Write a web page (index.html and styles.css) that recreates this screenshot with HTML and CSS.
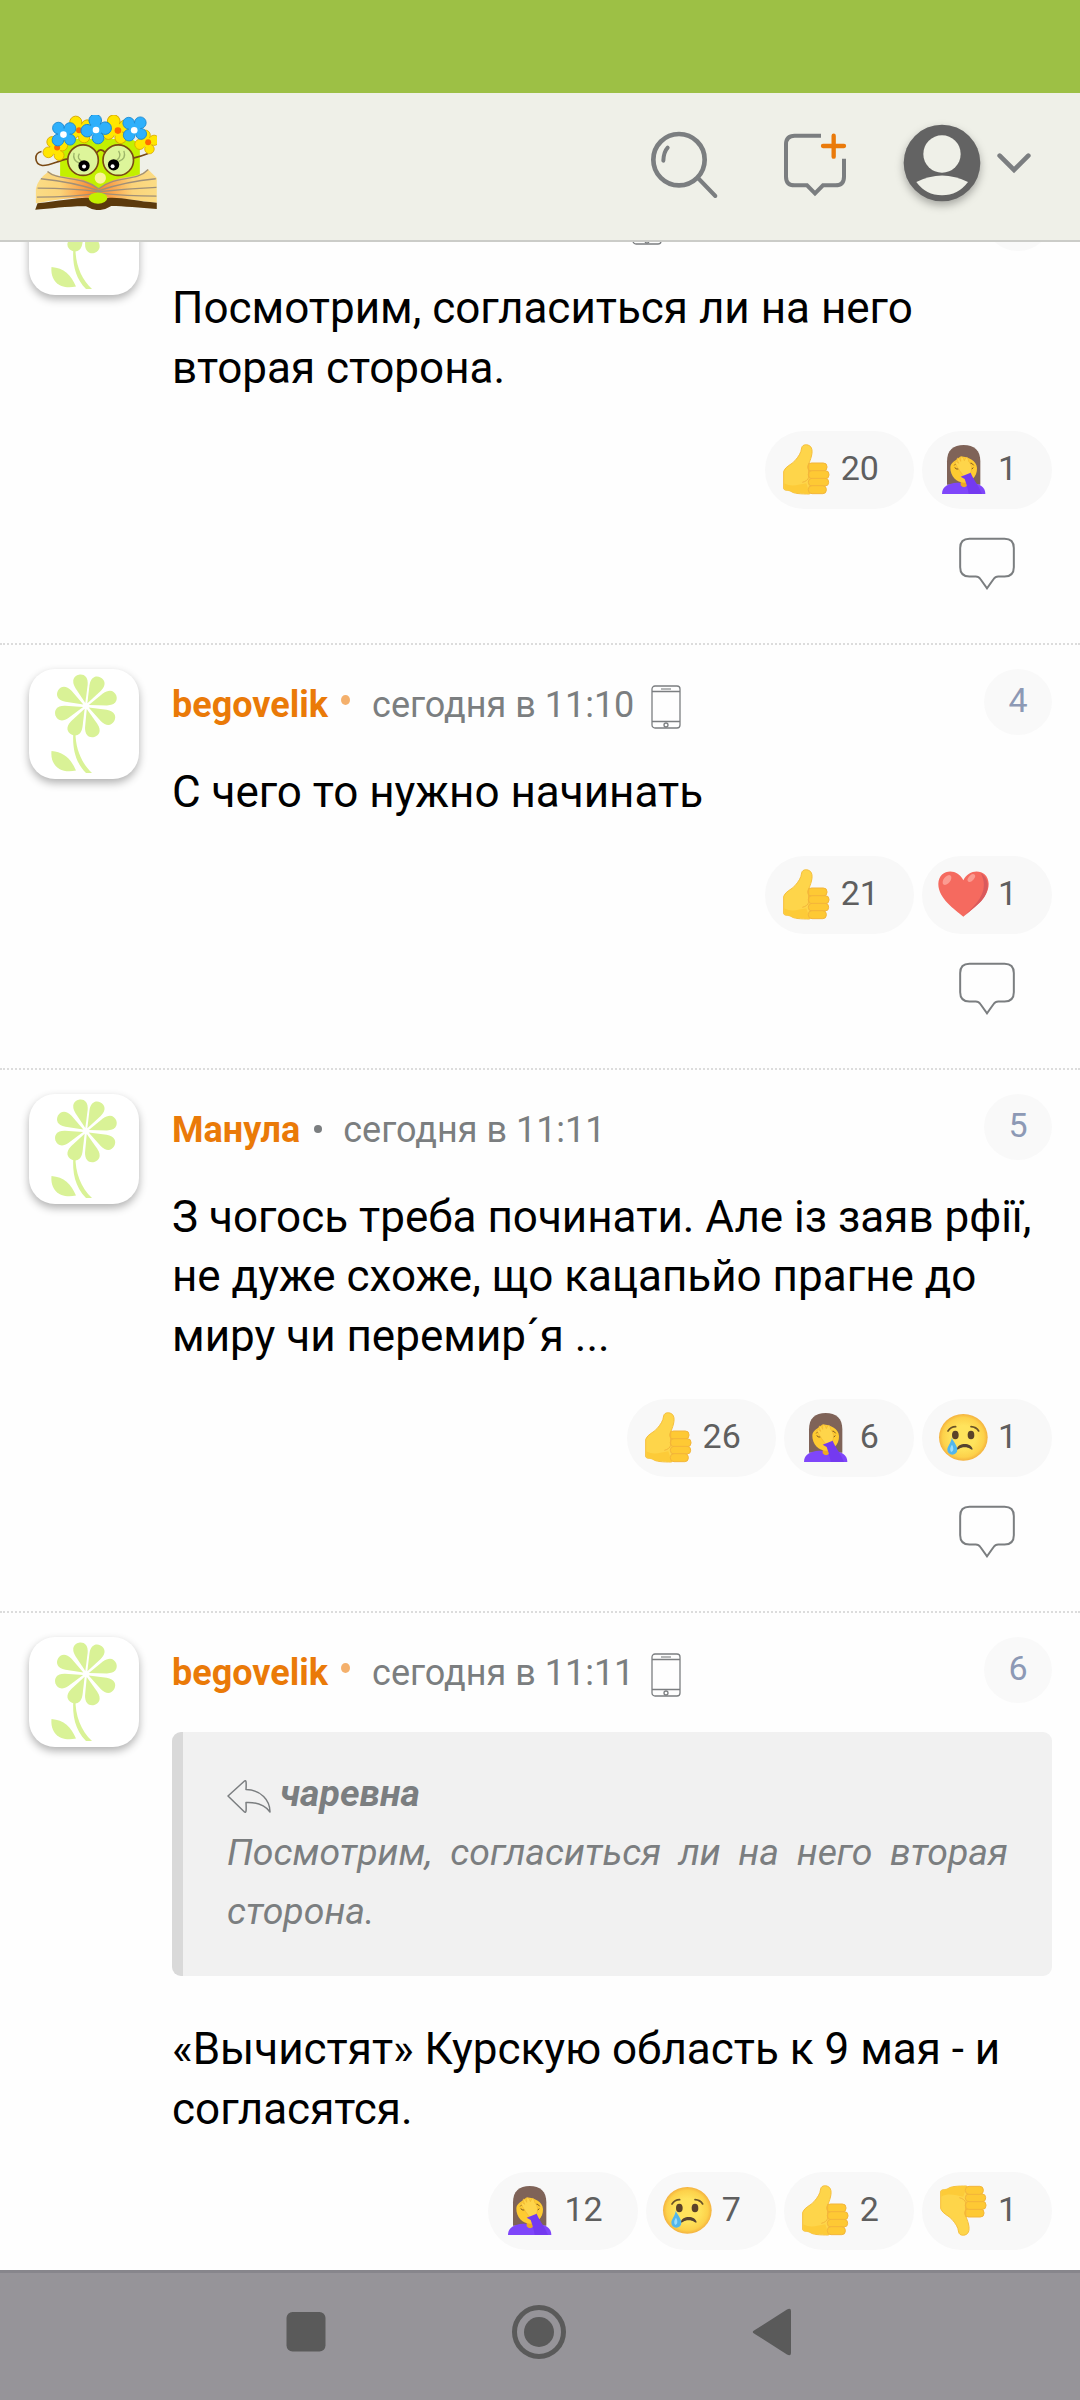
FILE: index.html
```html
<!DOCTYPE html>
<html lang="ru">
<head>
  <meta charset="utf-8">
  <title>Комментарии</title>
  <link rel="stylesheet" href="styles.css">
</head>
<body>
  <svg class="sprite">
    <defs>
      <linearGradient id="page" x1="0" x2="1">
        <stop offset="0" stop-color="#fbdc85"/>
        <stop offset=".2" stop-color="#fbd47a"/>
        <stop offset=".5" stop-color="#f9802a"/>
        <stop offset=".8" stop-color="#fbd47a"/>
        <stop offset="1" stop-color="#fbdc85"/>
      </linearGradient>
      <radialGradient id="face">
        <stop offset=".5" stop-color="#ffe35c"/>
        <stop offset=".85" stop-color="#fdd14a"/>
        <stop offset="1" stop-color="#f4b23f"/>
      </radialGradient>
      <path id="petal" d="M0 -3L-6.300 -20C-9 -28 -5 -32 0 -32S9 -28 6.300 -20Z"/>
      <g id="blossom">
        <circle cx="-14" cy="-14" r="14"/><circle cx="14" cy="-15" r="14"/>
        <circle cx="16" cy="12" r="13"/><circle cx="-13" cy="15" r="14"/>
        <circle r="14" stroke="none"/>
      </g>
    </defs>
    <symbol id="flower" viewBox="0 0 110 110">
      <g fill="#d9f296">
        <use href="#petal" transform="translate(57 37) rotate(-13)"/>
        <use href="#petal" transform="translate(57 37) rotate(27)"/>
        <use href="#petal" transform="translate(57 37) rotate(71)"/>
        <use href="#petal" transform="translate(57 37) rotate(118)"/>
        <use href="#petal" transform="translate(57 37) rotate(165)"/>
        <use href="#petal" transform="translate(57 37) rotate(207)"/>
        <use href="#petal" transform="translate(57 37) rotate(253)"/>
        <use href="#petal" transform="translate(57 37) rotate(299)"/>
        <path d="M44.500 62H46.500C46 78 52 94 63 104H57C46 93 43 78 44.500 62Z"/>
        <path d="M22.500 82C21 97 32 105 47 101.500C42 90 35 83 22.500 82Z"/>
      </g>
    </symbol>
    <symbol id="phone" viewBox="0 0 30 44">
      <g fill="none" stroke="#7b7e80" stroke-width="1.300">
        <rect x="1" y="1" width="28" height="42" rx="3"/>
        <path d="M1 6.500H29M1 36.500H29"/>
        <circle cx="15" cy="40" r="2"/>
        <path d="M10 4H20" stroke="#b5b7b8" stroke-width="2"/>
      </g>
    </symbol>
    <symbol id="reply" viewBox="654 381 174 160">
      <path d="M688 386H794Q822 386 822 414V472Q822 500 794 500H775Q766 500 761 508L741 536L721 508Q716 500 707 500H688Q660 500 660 472V414Q660 386 688 386Z" fill="none" stroke="#7b7e80" stroke-width="6"/>
    </symbol>
    <symbol id="arrow" viewBox="0 0 44 33">
      <path d="M1 16L17.500 1C19 0 19.500 1 19 9.500C34 10 43 20 43 32C37 24 29 22 19 22.500C19.500 32 19 33 17.500 32Z" fill="none" stroke="#7b7e80" stroke-width="1.500" stroke-linejoin="round"/>
    </symbol>
    <symbol id="thumb" viewBox="0 0 153 153">
      <path d="M8 82C14 66 32 62 42 50C52 38 60 28 62 12C64 0 80 0 88 7C98 18 92 38 84 58C98 90 98 120 86 150C60 150 38 149 30 142C22 137 8 142 8 132Z" fill="#fed54a" stroke="#f6bf3c" stroke-width="3"/>
      <path d="M10 118C30 130 54 122 76 118L86 149C60 149 38 148 30 142C22 137 9 140 10 130Z" fill="#fdcb38"/>
      <g fill="#fec934" stroke="#f3b53a" stroke-width="3">
        <rect x="80" y="57" width="58" height="24" rx="11"/>
        <rect x="82" y="80" width="62" height="24" rx="11"/>
        <rect x="82" y="103" width="61" height="23" rx="11"/>
        <rect x="82" y="125" width="54" height="24" rx="11"/>
      </g>
      <path d="M83 58V100Q80 111 64 115" fill="none" stroke="#f3b53a" stroke-width="3"/>
    </symbol>
    <symbol id="facepalm" viewBox="0 0 153 153">
      <path d="M27 122V52C27 18 46 3 77 3S127 18 127 52V122Z" fill="#7f6358"/>
      <path d="M12 150C12 126 32 118 56 116H98C122 118 142 126 142 150Z" fill="#7f46fa"/>
      <path d="M68 104H88V124Q78 136 68 124Z" fill="#eeaa22"/>
      <path d="M37 70C38 54 54 50 66 38C84 36 116 48 117 72C118 100 96 116 77 116S36 98 37 70Z" fill="#fecb31"/>
      <path d="M49 64Q54 55 63 58M50 71Q56 78 64 74M93 58Q103 55 107 64M95 75Q102 77 106 71" fill="none" stroke="#7b5420" stroke-width="3"/>
      <path d="M50 54Q56 50 62 58L57 44Q62 38 68 52L68 40Q74 34 79 50L83 42Q90 36 92 52C102 62 104 80 94 92L80 102C72 88 60 76 50 54Z" fill="#fed54a" stroke="#f2b634" stroke-width="2"/>
      <path d="M68 98L98 86C106 106 122 124 132 150H92C90 132 84 118 80 105Z" fill="#743af0"/>
    </symbol>
    <symbol id="cry" viewBox="0 0 153 153">
      <ellipse cx="76" cy="76" rx="73" ry="70" fill="url(#face)"/>
      <path d="M30 57Q38 44 53 44M99 44Q115 45 122 57" fill="none" stroke="#6a5227" stroke-width="5" stroke-linecap="round"/>
      <ellipse cx="52" cy="69" rx="10" ry="13" fill="#5b4329"/>
      <ellipse cx="99" cy="69" rx="10" ry="13" fill="#5b4329"/>
      <path d="M56 112C60 91 100 90 104 112C100 117 98 106 80 106S60 117 56 112Z" fill="#574330"/>
      <path d="M41 78C49 92 58 103 58 113A15 15 0 0 1 28 113C28 103 39 94 41 78Z" fill="#52b6ec"/>
      <path d="M42 98C37 104 34 114 40 120C48 116 47 106 42 98Z" fill="#9bdcfb"/>
    </symbol>
    <symbol id="heart" viewBox="0 0 153 153">
      <path d="M76 143C50 122 0 88 1 44C2 0 58 -6 76 34C94 -6 151 0 152 44C153 88 102 122 76 143Z" fill="#f56a5f"/>
      <path d="M128 12C162 34 151 78 124 102L76 143C112 108 158 68 128 12Z" fill="#d95a5d"/>
      <ellipse cx="27" cy="33" rx="10" ry="17" transform="rotate(38 27 33)" fill="#fb9c92"/>
      <ellipse cx="100" cy="27" rx="8" ry="14" transform="rotate(42 100 27)" fill="#fb9c92"/>
    </symbol>
  </svg>

  <div class="statusbar"></div>
  <header class="header">
    <svg class="logo" viewBox="105 100 366 286">
      <path d="M180 200Q182 176 220 172H385Q418 176 420 200V300L300 345L180 300Z" fill="#c3f000"/>
      <path d="M145 270C190 300 240 270 296 324C350 272 400 300 445 264L471 290V364C410 358 340 346 296 350C240 346 170 352 107 366V322Q112 294 145 270Z" fill="url(#page)"/>
      <g fill="none" stroke="#a09078" stroke-width="4">
        <path d="M142 270C175 300 240 280 296 322C350 280 410 302 445 264"/>
        <path d="M122 292Q220 302 296 328Q380 300 468 292M112 320Q220 320 296 331Q380 322 470 318M110 347Q220 347 296 335Q380 344 470 344"/>
      </g>
      <path d="M105 385L112 366C180 358 250 346 268 350H322C360 346 410 360 471 364V383C420 380 370 374 334 374Q296 398 258 375C210 374 150 382 105 385Z" fill="#5c3a0c"/>
      <ellipse cx="294" cy="350" rx="28" ry="17" fill="#c3f000"/>
      <circle cx="301" cy="290" r="17" fill="#fbf39a"/>
      <g fill="#ddf59a" stroke="#7a4a14" stroke-width="5">
        <circle cx="249" cy="236" r="46"/>
        <circle cx="355" cy="236" r="46"/>
        <path d="M203 232C170 238 150 254 126 252C102 248 100 214 124 210M290 214Q302 196 316 214M400 230Q425 224 445 216" fill="none"/>
      </g>
      <g fill="none" stroke="#9db56a" stroke-width="4">
        <path d="M222 214Q216 238 240 246M238 216Q228 232 248 240M372 208Q380 232 356 240M356 208Q366 226 350 236"/>
      </g>
      <circle cx="252" cy="253" r="17"/><circle cx="252" cy="255" r="6" fill="#fff"/>
      <circle cx="341" cy="250" r="17"/><circle cx="338" cy="254" r="6" fill="#fff"/>
      <g fill="#ffe600" stroke="#d8a800" stroke-width="2">
        <use href="#blossom" transform="translate(165 202) rotate(22) scale(1.150)"/>
        <use href="#blossom" transform="translate(238 145) rotate(20) scale(1.300)"/>
        <use href="#blossom" transform="translate(441 182) rotate(32) scale(1.100)"/>
        <use href="#blossom" transform="translate(350 144) rotate(26) scale(1.350)"/>
      </g>
      <g fill="#ff6a00">
        <circle cx="171" cy="198" r="9"/><circle cx="237" cy="146" r="9"/>
        <circle cx="354" cy="147" r="10"/><circle cx="445" cy="182" r="9"/>
      </g>
      <g fill="#2eb0fb" stroke="#1685cf" stroke-width="2">
        <use href="#blossom" transform="translate(191 158) rotate(4) scale(1.250)"/>
        <use href="#blossom" transform="translate(288 143) rotate(40) scale(1.350)"/>
        <use href="#blossom" transform="translate(404 142) scale(1.250)"/>
      </g>
      <g fill="#fff">
        <circle cx="190" cy="159" r="10"/><circle cx="288" cy="145" r="10"/><circle cx="403" cy="146" r="10"/>
      </g>
    </svg>
    <div class="header-icons">
      <svg class="icon-search" viewBox="84 97 210 240">
        <g fill="none" stroke="#7b7e80" stroke-linecap="round">
          <circle cx="174" cy="207" r="77" stroke-width="14"/>
          <path d="M231 262L283 316M140 171Q128 184 127 210" stroke-width="12"/>
        </g>
      </svg>
      <svg class="icon-add" viewBox="480 97 204 240">
        <g fill="none" stroke-width="12">
          <path d="M600 135H521Q495 135 495 161V258Q495 284 521 284H558L582 308L606 284H643Q669 284 669 258V204" stroke="#7b7e80"/>
          <path d="M638 135V198M606 166H669" stroke="#ea7a0a" stroke-width="13" stroke-linecap="round"/>
        </g>
      </svg>
      <svg class="icon-user" viewBox="844 97 240 240">
        <circle cx="964" cy="217" r="115" fill="#636363"/>
        <circle cx="964" cy="190" r="56" fill="#eff0e8"/>
        <path d="M887 274Q964 235 1042 274Q1012 314 964 314T887 274Z" fill="#eff0e8"/>
      </svg>
      <svg class="icon-down" viewBox="1120 97 120 240">
        <path d="M1137 195L1180 238L1223 195" fill="none" stroke="#7b7e80" stroke-width="14" stroke-linecap="round"/>
      </svg>
    </div>
  </header>

  <main class="feed">
    <article class="comment">
      <div class="avatar"><svg><use href="#flower"/></svg></div>
      <div class="body">
        <div class="meta scrolled">
          <svg class="phone"><use href="#phone"/></svg>
          <span class="num"></span>
        </div>
        <p class="text">Посмотрим, согласиться ли на него вторая сторона.</p>
        <div class="reactions">
          <span class="pill"><svg><use href="#thumb"/></svg>20</span>
          <span class="pill"><svg><use href="#facepalm"/></svg>1</span>
        </div>
        <svg class="reply"><use href="#reply"/></svg>
      </div>
    </article>

    <article class="comment">
      <div class="avatar"><svg><use href="#flower"/></svg></div>
      <div class="body">
        <div class="meta">
          <span class="name">begovelik</span><span class="dot mobile"></span>
          <span class="date">сегодня в 11:10</span>
          <svg class="phone"><use href="#phone"/></svg>
          <span class="num">4</span>
        </div>
        <p class="text">С чего то нужно начинать</p>
        <div class="reactions">
          <span class="pill"><svg><use href="#thumb"/></svg>21</span>
          <span class="pill"><svg><use href="#heart"/></svg>1</span>
        </div>
        <svg class="reply"><use href="#reply"/></svg>
      </div>
    </article>

    <article class="comment">
      <div class="avatar"><svg><use href="#flower"/></svg></div>
      <div class="body">
        <div class="meta">
          <span class="name">Манула</span><span class="dot"></span>
          <span class="date">сегодня в 11:11</span>
          <span class="num">5</span>
        </div>
        <p class="text">З чогось треба починати. Але із заяв рфії, не дуже схоже, що кацапьйо прагне до миру чи перемир´я ...</p>
        <div class="reactions">
          <span class="pill"><svg><use href="#thumb"/></svg>26</span>
          <span class="pill"><svg><use href="#facepalm"/></svg>6</span>
          <span class="pill"><svg><use href="#cry"/></svg>1</span>
        </div>
        <svg class="reply"><use href="#reply"/></svg>
      </div>
    </article>

    <article class="comment">
      <div class="avatar"><svg><use href="#flower"/></svg></div>
      <div class="body">
        <div class="meta">
          <span class="name">begovelik</span><span class="dot mobile"></span>
          <span class="date">сегодня в 11:11</span>
          <svg class="phone"><use href="#phone"/></svg>
          <span class="num">6</span>
        </div>
        <blockquote class="quote">
          <div class="quote-author"><svg><use href="#arrow"/></svg>чаревна</div>
          <p>Посмотрим, согласиться ли на него вторая сторона.</p>
        </blockquote>
        <p class="text">«Вычистят» Курскую область к 9 мая - и согласятся.</p>
        <div class="reactions">
          <span class="pill"><svg><use href="#facepalm"/></svg>12</span>
          <span class="pill"><svg><use href="#cry"/></svg>7</span>
          <span class="pill"><svg><use href="#thumb"/></svg>2</span>
          <span class="pill"><svg class="flip"><use href="#thumb"/></svg>1</span>
        </div>
      </div>
    </article>
  </main>

  <nav class="navbar">
    <svg viewBox="0 0 60 60"><rect x="10.500" y="10" width="39" height="39.500" rx="6"/></svg>
    <svg viewBox="0 0 60 60"><circle cx="30" cy="30" r="24.500" fill="none" stroke="#5a5a5a" stroke-width="5"/><circle cx="30" cy="30" r="15"/></svg>
    <svg viewBox="0 0 60 60"><path d="M12 28.500L45 7.500Q49 5.500 49 9V51Q49 54.500 45 52.500L12 31.500Q9.500 30 12 28.500Z"/></svg>
  </nav>
</body>
</html>
```
FILE: styles.css
```css
body {
  margin: 0;
  width: 1080px;
  height: 2400px;
  display: flex;
  flex-direction: column;
  overflow: hidden;
  background: #fefefe;
  font-family: Roboto, "Noto Sans", sans-serif;
}
p {
  margin: 0;
}
svg {
  display: block;
  flex: none;
}
.sprite {
  width: 0;
  height: 0;
}
.statusbar {
  flex: none;
  height: 93px;
  background: #9dc045;
}
.header {
  flex: none;
  box-sizing: border-box;
  height: 149px;
  padding: 0 46px 8px 35px;
  display: flex;
  align-items: center;
  justify-content: space-between;
  background: #eff0e8;
  border-bottom: 2px solid #cbccc8;
}
.logo {
  width: 122px;
  height: 95px;
}
.header-icons {
  display: flex;
}
.header-icons svg {
  height: 80px;
}
.icon-search {
  width: 70px;
  margin-right: 62px;
}
.icon-add {
  width: 68px;
  margin-right: 53px;
}
.icon-user {
  width: 80px;
  margin-right: 12px;
  filter: drop-shadow(0 4px 4px rgba(0,0,0,.3));
}
.icon-down {
  width: 40px;
}

/* comments */
.feed {
  flex: 1;
  min-height: 0;
  overflow: hidden;
}
.comment {
  display: flex;
  gap: 33px;
  box-sizing: border-box;
  padding: 24px 28px 53px 29px;
  border-top: 2px dotted #dcdcdc;
}
.comment:first-child {
  margin-top: -83px;
}
.avatar {
  flex: none;
  width: 110px;
  height: 110px;
  border-radius: 26px;
  background: #fff;
  box-shadow: 0 4px 9px rgba(0,0,0,.3);
}
.avatar svg {
  width: 110px;
  height: 110px;
}
.body {
  flex: 1;
  min-width: 0;
}
.meta {
  display: flex;
  height: 66px;
  font-size: 36px;
  line-height: 72px;
  color: #7b7e80;
}
.name {
  color: #ea7a08;
  font-weight: 700;
}
.dot {
  width: 8px;
  height: 8px;
  margin: 31px 21px 0 14px;
  border-radius: 50%;
  background: #7b7e80;
}
.dot.mobile {
  width: 9px;
  height: 10px;
  margin: 26px 22px 0 13px;
  background: #f4b06c;
}
.phone {
  width: 30px;
  height: 44px;
  margin: 16px 0 0 17px;
}
.scrolled .phone {
  margin-left: 460px;
}
.num {
  width: 68px;
  height: 66px;
  margin-left: auto;
  border-radius: 50%;
  background: #f9f9f9;
  color: #8d99b5;
  font-size: 34px;
  line-height: 62px;
  text-align: center;
}
.text {
  margin-top: 28px;
  font-size: 44px;
  line-height: 59.5px;
  color: #000;
}
.reactions {
  display: flex;
  justify-content: flex-end;
  gap: 8px;
  margin-top: 33px;
}
.pill {
  display: flex;
  height: 78px;
  padding: 0 35px 0 16px;
  border-radius: 39px;
  background: #f8f8f8;
  color: #5f5f5f;
  font-size: 34px;
  line-height: 75px;
}
.pill svg {
  width: 51px;
  height: 51px;
  margin: 13px 9px 0 0;
}
.pill .flip {
  transform: scaleY(-1);
}
.reply {
  width: 58px;
  height: 53px;
  margin: 28px 36px 0 auto;
}
.quote {
  box-sizing: border-box;
  height: 244px;
  margin: 29px 0 44px;
  padding: 32px 44px 0 44px;
  border-left: 11px solid #d9d9d9;
  border-radius: 9px;
  background: #f1f1f1;
  color: #7b7e80;
  font-size: 37.4px;
  font-style: italic;
  line-height: 59px;
  text-align: justify;
}
.quote + .text {
  margin-top: 0;
}
.quote-author {
  display: flex;
  font-weight: 700;
}
.quote-author svg {
  width: 44px;
  height: 33px;
  margin: 16px 9px 0 0;
}

/* android buttons */
.navbar {
  flex: none;
  box-sizing: border-box;
  height: 130px;
  padding: 29px 0 0 276px;
  display: flex;
  gap: 173px;
  background: #969499;
  border-top: 3px solid #87868c;
}
.navbar svg {
  width: 60px;
  height: 60px;
  fill: #5a5a5a;
}
```
